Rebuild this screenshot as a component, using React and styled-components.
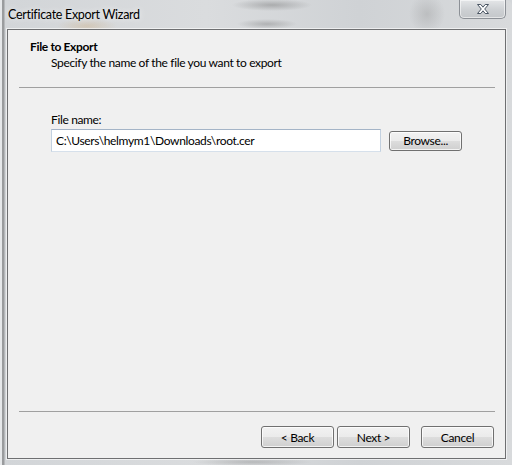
import React from "react";
import styled, { createGlobalStyle } from "styled-components";

const UI_FONT = `"Lato", "Noto Sans", sans-serif`;

const GlobalStyle = createGlobalStyle`
  html, body {
    margin: 0;
    padding: 0;
    background: #d4d7da;
  }
  body {
    font-family: ${UI_FONT};
    font-size: 12px;
    letter-spacing: -0.35px;
    color: #000;
  }
`;

const App = () => {
  return (
    <>
      <GlobalStyle />
      <Window>
        <TitleBar>
          <Caption>Certificate Export Wizard</Caption>
          <CloseButton aria-label="Close">
            <svg width="12" height="10" viewBox="0 0 12 10">
              <polygon
                points="0.5,0.5 3.8,0.5 6,3.2 8.2,0.5 11.5,0.5 7.7,5 11.5,9.5 8.2,9.5 6,6.8 3.8,9.5 0.5,9.5 4.3,5"
                fill="#ffffff"
                stroke="#4a5563"
                strokeWidth="1"
                strokeLinejoin="round"
              />
            </svg>
          </CloseButton>
        </TitleBar>
        <Client>
          <Header>
            <HeaderTitle>File to Export</HeaderTitle>
            <HeaderSubtitle>
              Specify the name of the file you want to export
            </HeaderSubtitle>
          </Header>
          <Separator />
          <Body>
            <FieldLabel>File name:</FieldLabel>
            <FieldRow>
              <TextBox
                readOnly
                value={"C:\\Users\\helmym1\\Downloads\\root.cer"}
              />
              <PushButton $width={73} $height={20}>
                Browse...
              </PushButton>
            </FieldRow>
          </Body>
          <Separator />
          <Footer>
            <PushButton>&lt; Back</PushButton>
            <PushButton>Next &gt;</PushButton>
            <PushButton $spaced>Cancel</PushButton>
          </Footer>
        </Client>
      </Window>
    </>
  );
};

const Window = styled.div`
  width: 512px;
  height: 465px;
  box-sizing: border-box;
  display: flex;
  flex-direction: column;
  border-top-right-radius: 6px;
  border-left: 2px solid #e6e8ea;
  background:
    radial-gradient(ellipse 40px 6px at 270px 5px, rgba(90, 90, 90, 0.35), transparent),
    radial-gradient(ellipse 30px 5px at 265px 24px, rgba(90, 90, 90, 0.3), transparent),
    radial-gradient(ellipse 30px 8px at 85px 26px, rgba(200, 150, 80, 0.25), transparent),
    radial-gradient(ellipse 18px 20px at 425px 14px, rgba(120, 120, 120, 0.25), transparent),
    radial-gradient(ellipse 60px 4px at 250px 462px, rgba(110, 110, 110, 0.3), transparent),
    linear-gradient(90deg, #9a9c9e 0px, #9a9c9e 2px, #d2d5d8 3px, #dadcde 40%, #cfd2d5 70%, #d8dadc 100%);
`;

const TitleBar = styled.div`
  height: 29px;
  flex-shrink: 0;
  display: flex;
  align-items: flex-start;
  justify-content: space-between;
  padding: 0 6px 0 6px;
`;

const Caption = styled.div`
  font-family: ${UI_FONT};
  font-size: 12.5px;
  letter-spacing: -0.3px;
  line-height: 16px;
  padding-top: 7px;
  color: #000;
  text-shadow: 0 0 6px rgba(255, 255, 255, 0.9);
`;

const CloseButton = styled.div`
  width: 45px;
  height: 18px;
  display: flex;
  align-items: center;
  justify-content: center;
  border: 1px solid #8c9096;
  border-top: none;
  border-radius: 0 0 5px 5px;
  background: linear-gradient(#e4e6e8, #cdd0d3 55%, #c4c7ca);
  box-shadow: inset 0 0 0 1px rgba(255, 255, 255, 0.55);
`;

const Client = styled.div`
  flex: 1;
  margin: 0 6px 6px 5px;
  display: flex;
  flex-direction: column;
  background: #f0f0f0;
  border: 1px solid #6e6f71;
  box-shadow: 0 0 0 1px rgba(255, 255, 255, 0.6);
`;

const Header = styled.div`
  padding: 9px 0 16px 22px;
`;

const HeaderTitle = styled.div`
  font-weight: bold;
  line-height: 16px;
`;

const HeaderSubtitle = styled.div`
  line-height: 16px;
  padding-left: 21px;
`;

const Separator = styled.div`
  height: 0;
  margin: 0 10px 0 11px;
  border-top: 1px solid #a0a0a0;
  flex-shrink: 0;
`;

const Body = styled.div`
  flex: 1;
  padding: 24px 0 0 43px;
`;

const FieldLabel = styled.div`
  line-height: 16px;
`;

const FieldRow = styled.div`
  margin-top: 1px;
  display: flex;
  align-items: center;
  gap: 8px;
`;

const TextBox = styled.input`
  width: 330px;
  height: 23px;
  box-sizing: border-box;
  padding: 0 4px;
  font-family: ${UI_FONT};
  font-size: 12px;
  letter-spacing: -0.35px;
  color: #000;
  background: #fff;
  border: 1px solid;
  border-color: #a4b4c7 #c3d1e0 #d6e0eb #c3d1e0;
  outline: none;
`;

const PushButton = styled.div`
  width: ${({ $width }) => $width || 73}px;
  height: ${({ $height }) => $height || 22}px;
  box-sizing: border-box;
  margin-left: ${({ $spaced }) => ($spaced ? "8px" : "0")};
  display: flex;
  align-items: center;
  justify-content: center;
  font-size: 12px;
  color: #000;
  border: 1px solid #707070;
  border-radius: 3px;
  background: linear-gradient(#f2f2f2 0%, #ebebeb 50%, #dddddd 51%, #cfcfcf 100%);
  box-shadow: inset 0 0 0 1px rgba(255, 255, 255, 0.75);
`;

const Footer = styled.div`
  display: flex;
  justify-content: flex-end;
  gap: 3px;
  padding: 14px 11px 10px 0;
`;

export default App;
